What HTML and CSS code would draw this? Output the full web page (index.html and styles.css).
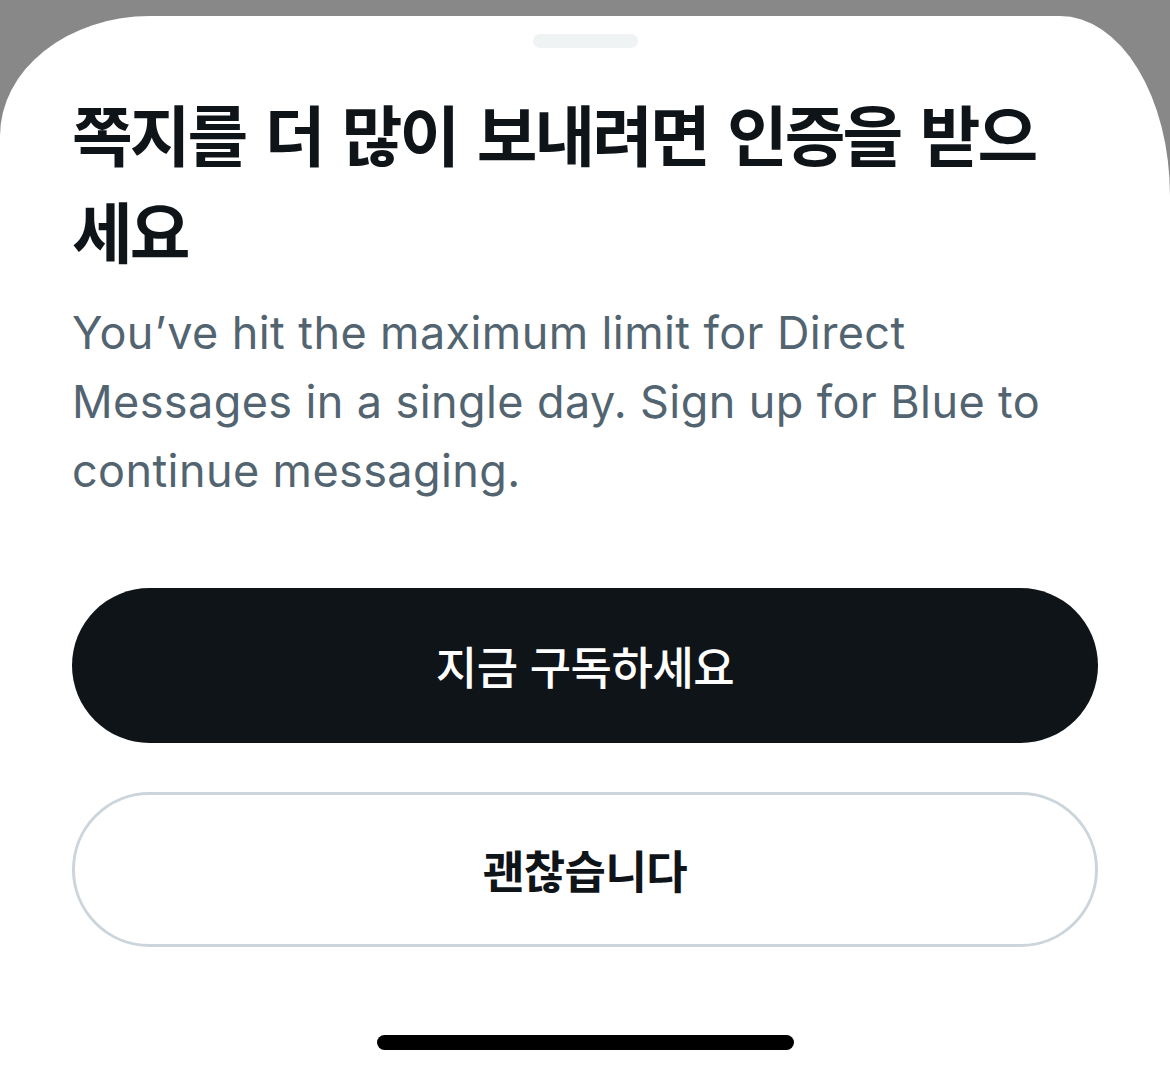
FILE: index.html
```html
<!DOCTYPE html>
<html lang="ko">
<head>
    <meta charset="UTF-8">
    <meta name="viewport" content="width=device-width, initial-scale=1.0">
    <title>쪽지 한도</title>
    <link rel="stylesheet" href="styles.css">
</head>
<body>
    <div class="sheet">
        <div class="grabber"></div>

        <h1 class="title">쪽지를 더 많이 보내려면 인증을 받으세요</h1>
        <p class="message">You’ve hit the maximum limit for Direct Messages in a single day. Sign up for Blue to continue messaging.</p>

        <div class="actions">
            <button class="btn btn-primary">지금 구독하세요</button>
            <button class="btn btn-outline">괜찮습니다</button>
        </div>

        <div class="home-bar"></div>
    </div>
</body>
</html>
```

FILE: styles.css
```css
html, body {
    margin: 0;
    padding: 0;
}
body {
    background: #888888;
    height: 1075px;
    overflow: hidden;
    padding-top: 16px;
    box-sizing: border-box;
}
.sheet {
    background: #ffffff;
    height: 100%;
    border-top-left-radius: 150px 120px;
    border-top-right-radius: 110px 180px;
    display: flex;
    flex-direction: column;
    padding: 0 72px;
}
.grabber {
    align-self: center;
    width: 105px;
    height: 14px;
    margin-top: 18px;
    border-radius: 7px;
    background: #eff3f4;
}
.title {
    margin: 36px 0 0;
    font-family: "Noto Sans CJK KR", "Noto Sans", sans-serif;
    font-weight: 700;
    font-size: 66px;
    line-height: 97px;
    letter-spacing: -3px;
    word-spacing: 4px;
    color: #0f1419;
    padding-right: 40px;
}
.message {
    margin: 20px 0 0;
    font-family: "Inter", "Noto Sans", sans-serif;
    font-size: 45px;
    line-height: 69px;
    letter-spacing: 0.4px;
    color: #536471;
}
.actions {
    display: flex;
    flex-direction: column;
    gap: 49px;
    margin-top: 83px;
}
.btn {
    height: 155px;
    border-radius: 78px;
    font-family: "Noto Sans CJK KR", sans-serif;
    font-size: 45px;
    letter-spacing: -0.5px;
}
.btn-primary {
    background: #0f1419;
    color: #ffffff;
    border: none;
    font-weight: 500;
}
.btn-outline {
    background: #ffffff;
    color: #0f1419;
    border: 3px solid #cbd5db;
    font-weight: 700;
}
.home-bar {
    align-self: center;
    width: 417px;
    height: 15px;
    border-radius: 8px;
    background: #000000;
    margin-top: 88px;
}
```
